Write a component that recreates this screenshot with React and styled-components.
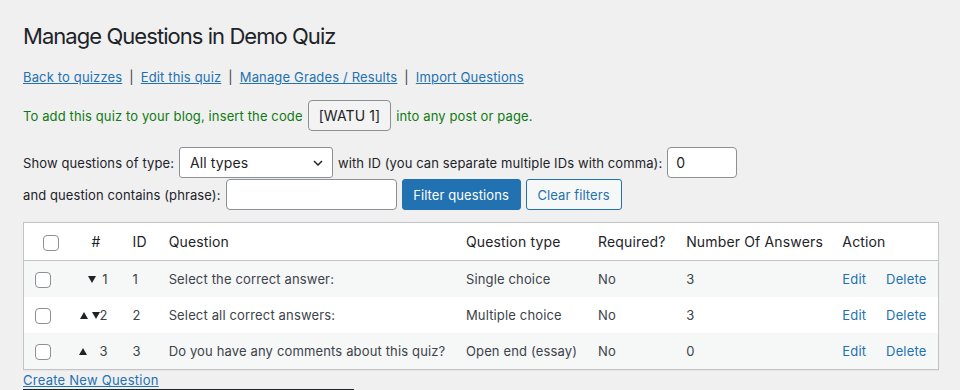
import React from 'react'
import styled, { createGlobalStyle } from 'styled-components'

const GlobalStyle = createGlobalStyle`
  body {
    margin: 0;
    background: #f0f0f1;
    font-family: Inter, "Liberation Sans", sans-serif;
    color: #1d2327;
  }
`

const Wrap = styled.div`
  padding: 0 21px 0 23px;
  width: 916px;
`

const Title = styled.h1`
  font-size: 22px;
  font-weight: 400;
  margin: 0;
  padding: 24px 0 0;
  line-height: 24px;
  letter-spacing: -0.95px;
`

const NavRow = styled.p`
  margin: 20px 0 0;
  font-size: 13px;
  line-height: 18px;
  letter-spacing: 0.15px;
`

const A = styled.a`
  color: #2271b1;
  text-decoration: underline;
  cursor: pointer;
`

const Sep = styled.span`
  margin: 0 7px;
  color: #3c434a;
`

const Notice = styled.p`
  display: flex;
  align-items: center;
  gap: 5px;
  margin: 14px 0 0;
  color: #0f7a12;
  font-size: 13px;
  letter-spacing: 0.12px;
`

const Code = styled.span`
  display: inline-flex;
  align-items: center;
  box-sizing: border-box;
  height: 31px;
  padding: 0 10px;
  background: #f3f3f4;
  border: 1px solid #8c8f94;
  border-radius: 4px;
  color: #1d2327;
  font-size: 14px;
  letter-spacing: 0.1px;
`

const FilterLine = styled.div`
  display: flex;
  align-items: center;
  gap: 5px;
  font-size: 13px;
  letter-spacing: 0.1px;
  margin-top: ${p => p.$top || 0}px;
`

const Select = styled.div`
  display: flex;
  align-items: center;
  justify-content: space-between;
  box-sizing: border-box;
  width: 154px;
  height: 31px;
  padding: 0 8px 0 10px;
  background: #fff;
  border: 1px solid #8c8f94;
  border-radius: 3px;
  font-size: 14px;
`

const Input = styled.div`
  box-sizing: border-box;
  width: ${p => p.$w}px;
  height: 31px;
  padding: 0 8px;
  display: flex;
  align-items: center;
  background: #fff;
  border: 1px solid #8c8f94;
  border-radius: 4px;
  font-size: 14px;
`

const Button = styled.button`
  height: 31px;
  width: ${p => p.$w}px;
  padding: 0;
  border-radius: 3px;
  font-family: inherit;
  font-size: 13px;
  letter-spacing: 0.1px;
  border: 1px solid #2271b1;
  background: ${p => (p.$primary ? '#2271b1' : '#f6f7f7')};
  color: ${p => (p.$primary ? '#fff' : '#2271b1')};
`

const Table = styled.table`
  margin-top: 12px;
  width: 100%;
  table-layout: fixed;
  border-collapse: collapse;
  border: 1px solid #c3c4c7;
  background: #fff;
  font-size: 13px;
  letter-spacing: 0.15px;
  box-shadow: 0 1px 1px rgba(0, 0, 0, 0.04);
`

const Th = styled.th`
  text-align: ${p => p.$align || 'left'};
  font-weight: 400;
  font-size: 14px;
  height: 37px;
  padding: ${p => p.$pad || '0 8px'};
  border-bottom: 1px solid #c3c4c7;
  white-space: nowrap;
`

const Tr = styled.tr`
  background: ${p => (p.$alt ? '#f6f7f7' : '#fff')};
`

const Td = styled.td`
  height: 36px;
  padding: ${p => p.$pad || '0 8px'};
  color: #3c434a;
  white-space: nowrap;
`

const Order = styled.div`
  display: flex;
  justify-content: flex-end;
  align-items: center;
`

const Tri = styled.span`
  width: 0;
  height: 0;
  border-left: 4.5px solid transparent;
  border-right: 4.5px solid transparent;
  ${p => (p.$up ? 'border-bottom' : 'border-top')}: 7px solid #1d2327;
  margin-right: ${p => p.$mr || 0}px;
`

const Box = styled.span`
  display: inline-block;
  vertical-align: middle;
  width: 16px;
  height: 16px;
  box-sizing: border-box;
  border: 1px solid #8c8f94;
  border-radius: 4px;
  background: #fff;
`

const Actions = styled.div`
  display: flex;
  gap: 20px;
`

const ActionLink = styled.a`
  color: #2271b1;
`

const Bottom = styled.div`
  margin-top: 2px;
  font-size: 13px;
  letter-spacing: 0.25px;
  line-height: 16px;
  width: 331px;
  border-bottom: 1px solid #1d2327;
  padding-bottom: 1px;
`

const rows = [
  { id: 1, arrows: [{ up: false, mr: 6 }], q: 'Select the correct answer:', type: 'Single choice', n: 3 },
  { id: 2, arrows: [{ up: true, mr: 4 }, { up: false, mr: 0 }], q: 'Select all correct answers:', type: 'Multiple choice', n: 3 },
  { id: 3, arrows: [{ up: true, mr: 12 }], q: 'Do you have any comments about this quiz?', type: 'Open end (essay)', n: 0 }
]

export default function App () {
  return (
    <>
      <GlobalStyle />
      <Wrap>
        <Title>Manage Questions in Demo Quiz</Title>
        <NavRow>
          <A>Back to quizzes</A><Sep>|</Sep>
          <A>Edit this quiz</A><Sep>|</Sep>
          <A>Manage Grades / Results</A><Sep>|</Sep>
          <A>Import Questions</A>
        </NavRow>
        <Notice>
          To add this quiz to your blog, insert the code <Code>[WATU 1]</Code> into any post or page.
        </Notice>
        <FilterLine $top={16}>
          Show questions of type:
          <Select>
            All types
            <svg width='12' height='12' viewBox='0 0 12 12'>
              <path d='M2 4l4 4 4-4' fill='none' stroke='#1d2327' strokeWidth='1.5' />
            </svg>
          </Select>
          with ID (you can separate multiple IDs with comma):
          <Input $w={70}>0</Input>
        </FilterLine>
        <FilterLine $top={1}>
          and question contains (phrase):
          <Input $w={171} />
          <Button $primary $w={119}>Filter questions</Button>
          <Button $w={96}>Clear filters</Button>
        </FilterLine>
        <Table>
          <colgroup>
            <col style={{ width: 56 }} />
            <col style={{ width: 45 }} />
            <col style={{ width: 36 }} />
            <col style={{ width: 297 }} />
            <col style={{ width: 132 }} />
            <col style={{ width: 88 }} />
            <col style={{ width: 156 }} />
            <col style={{ width: 104 }} />
          </colgroup>
          <thead>
            <tr>
              <Th $pad='0 0 0 19px'><Box /></Th>
              <Th $align='right' $pad='0 24px 0 0'>#</Th>
              <Th>ID</Th>
              <Th>Question</Th>
              <Th>Question type</Th>
              <Th>Required?</Th>
              <Th>Number Of Answers</Th>
              <Th>Action</Th>
            </tr>
          </thead>
          <tbody>
            {rows.map((r, i) => (
              <Tr key={r.id} $alt={i % 2 === 0}>
                <Td $pad='0 0 0 11px'><Box /></Td>
                <Td $pad='0 17px 0 0'>
                  <Order>
                    {r.arrows.map((a, k) => <Tri key={k} $up={a.up} $mr={a.mr} />)}
                    {r.id}
                  </Order>
                </Td>
                <Td>{r.id}</Td>
                <Td>{r.q}</Td>
                <Td>{r.type}</Td>
                <Td>No</Td>
                <Td>{r.n}</Td>
                <Td>
                  <Actions>
                    <ActionLink>Edit</ActionLink>
                    <ActionLink>Delete</ActionLink>
                  </Actions>
                </Td>
              </Tr>
            ))}
          </tbody>
        </Table>
        <Bottom><A>Create New Question</A></Bottom>
      </Wrap>
    </>
  )
}
